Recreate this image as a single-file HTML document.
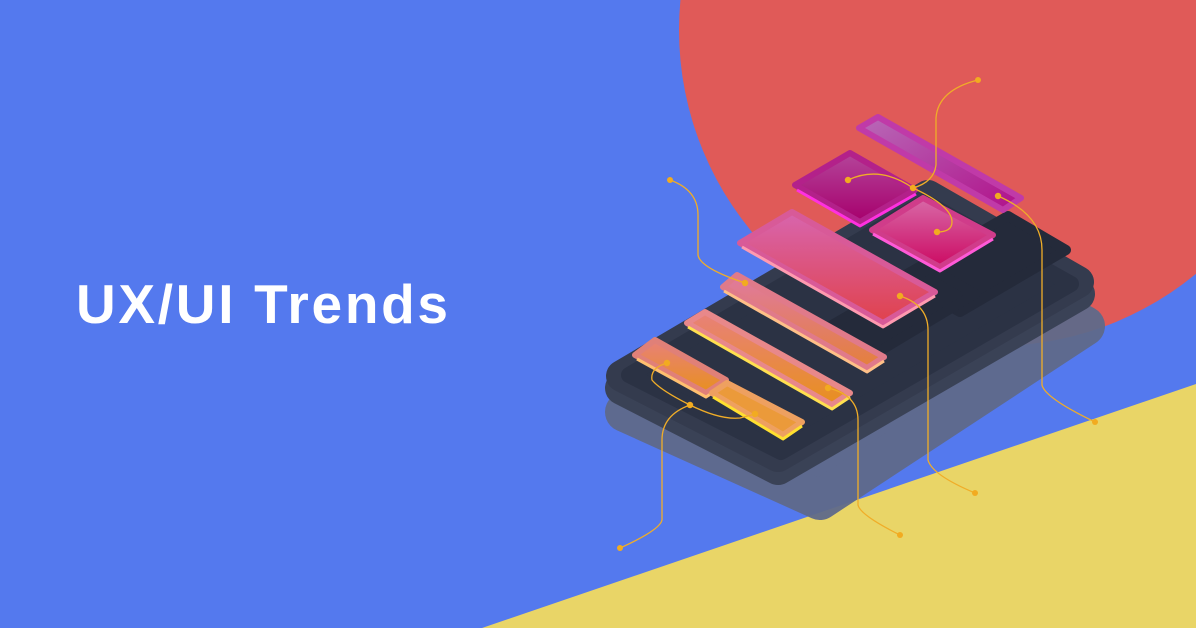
<!DOCTYPE html>
<html><head><meta charset="utf-8"><style>
html,body{margin:0;padding:0;width:1196px;height:628px;overflow:hidden;background:#5479ee}
.t{position:absolute;left:76px;top:272px;font:bold 55px "Liberation Sans",sans-serif;color:#fff;letter-spacing:2.7px;white-space:nowrap}
svg{position:absolute;left:0;top:0}
</style></head><body>
<svg width="1196" height="628" viewBox="0 0 1196 628">
<defs>
<linearGradient id="gE" x1="0" y1="0" x2="0" y2="1"><stop offset="0" stop-color="#d865ae"/><stop offset="1" stop-color="#e0424c"/></linearGradient>
<linearGradient id="gF" x1="0" y1="0" x2="0" y2="1"><stop offset="0" stop-color="#b4459a"/><stop offset="1" stop-color="#a6006c"/></linearGradient>
<linearGradient id="gG" x1="0" y1="0" x2="0" y2="1"><stop offset="0" stop-color="#d86aa8"/><stop offset="1" stop-color="#cc0a62"/></linearGradient>
<linearGradient id="gH" x1="0" y1="0" x2="1" y2="1"><stop offset="0" stop-color="#b86ab8"/><stop offset="1" stop-color="#b0108a"/></linearGradient>
<linearGradient id="gO" x1="0" y1="0" x2="0" y2="1"><stop offset="0" stop-color="#e8807a"/><stop offset="1" stop-color="#e8901e"/></linearGradient>
<linearGradient id="gP" x1="0" y1="0" x2="0" y2="1"><stop offset="0" stop-color="#e07aa0"/><stop offset="1" stop-color="#e4803a"/></linearGradient>
</defs>
<circle cx="995" cy="30" r="316" fill="#e05a58"/>
<polygon points="482,628 1196,384 1196,628" fill="#e9d567"/>
<polygon points="625,412 930,238 1085,326 820,500" fill="#5f6a8a" stroke="#5f6a8a" stroke-width="40" stroke-linejoin="round" opacity="0.95"/>
<polygon points="622,388 928,208 1078,294 778,468" fill="#3a4256" stroke="#3a4256" stroke-width="34" stroke-linejoin="round"/>
<polygon points="622,376 928,196 1078,282 778,456" fill="#343b4e" stroke="#343b4e" stroke-width="32" stroke-linejoin="round"/>
<polygon points="629,375 925,202 1071,284 781,452" fill="#2b3244" stroke="#2b3244" stroke-width="16" stroke-linejoin="round"/>
<polygon points="900,278 1008,216 1066,250 960,312" fill="#242a3a" stroke="#242a3a" stroke-width="10" stroke-linejoin="round"/>
<polygon points="820,332 930,268 975,294 870,357" fill="#242a3a" stroke="#242a3a" stroke-width="10" stroke-linejoin="round"/>
<g stroke-linejoin="round" stroke-width="6">
<polygon points="859,128 878,117 1021,198 1003,210" fill="url(#gH)" stroke="#c03aa8"/>
<polygon points="795,185 850,153 915,190 860,222" fill="url(#gF)" stroke="#b3218a"/>
<path d="M797,190 L860,226 L916,194" fill="none" stroke="#ff30e0" stroke-width="3"/>
<polygon points="872,230 923,198 993,235 940,267" fill="url(#gG)" stroke="#d03c8a"/>
<path d="M873,234 L940,271 L993,239" fill="none" stroke="#ff5ad8" stroke-width="3"/>
<polygon points="740,243 792,212 935,292 883,323" fill="url(#gE)" stroke="#d85a98"/>
<path d="M742,247 L883,327 L935,296" fill="none" stroke="#ff9ab0" stroke-width="3"/>
<polygon points="723,287 737,275 884,357 867,368" fill="url(#gP)" stroke="#e07a8a"/>
<path d="M724,291 L867,372 L884,361" fill="none" stroke="#ffc088" stroke-width="3"/>
<polygon points="687,323 705,312 850,393 832,405" fill="url(#gO)" stroke="#e8888a"/>
<path d="M688,327 L832,409 L850,397" fill="none" stroke="#ffe050" stroke-width="3"/>
<polygon points="635,355 655,340 726,380 706,393" fill="url(#gO)" stroke="#e08078"/>
<path d="M637,359 L706,397 L726,384" fill="none" stroke="#ffc070" stroke-width="3"/>
<polygon points="712,393 727,383 802,422 783,435" fill="#eb9a3a" stroke="#eea060"/>
<path d="M713,397 L783,439 L802,426" fill="none" stroke="#ffe030" stroke-width="3"/>
</g>
<g fill="none" stroke="#f0ad28" stroke-width="1.3">
<path d="M670,180 Q698,190 698,215 L698,255 Q700,268 745,283"/>
<path d="M978,80 Q938,90 936,118 L936,165 Q934,182 913,188"/>
<path d="M848,180 Q880,165 913,188 Q952,206 952,222 Q952,232 937,232"/>
<path d="M998,196 Q1042,215 1042,250 L1042,385 Q1045,398 1095,422"/>
<path d="M900,296 Q928,305 928,330 L928,460 Q932,475 975,493"/>
<path d="M828,388 Q858,395 858,420 L858,505 Q860,515 900,535"/>
<path d="M667,363 Q650,368 652,380 Q660,390 690,405 Q720,420 740,418 Q752,415 755,414"/>
<path d="M690,405 Q662,415 662,440 L662,520 Q660,530 620,548"/>
</g>
<g fill="#f2ab20">
<circle cx="670" cy="180" r="3"/><circle cx="745" cy="283" r="3.2"/><circle cx="978" cy="80" r="3"/>
<circle cx="913" cy="188" r="3.2"/><circle cx="848" cy="180" r="3.2"/><circle cx="937" cy="232" r="3.2"/>
<circle cx="998" cy="196" r="3.2"/><circle cx="1095" cy="422" r="3"/><circle cx="900" cy="296" r="3.2"/>
<circle cx="975" cy="493" r="3"/><circle cx="828" cy="388" r="3.2"/><circle cx="900" cy="535" r="3"/>
<circle cx="667" cy="363" r="3.2"/><circle cx="690" cy="405" r="3.2"/><circle cx="755" cy="414" r="3.2"/>
<circle cx="620" cy="548" r="3"/>
</g>
</svg>
<div class="t">UX/UI Trends</div>
</body></html>
